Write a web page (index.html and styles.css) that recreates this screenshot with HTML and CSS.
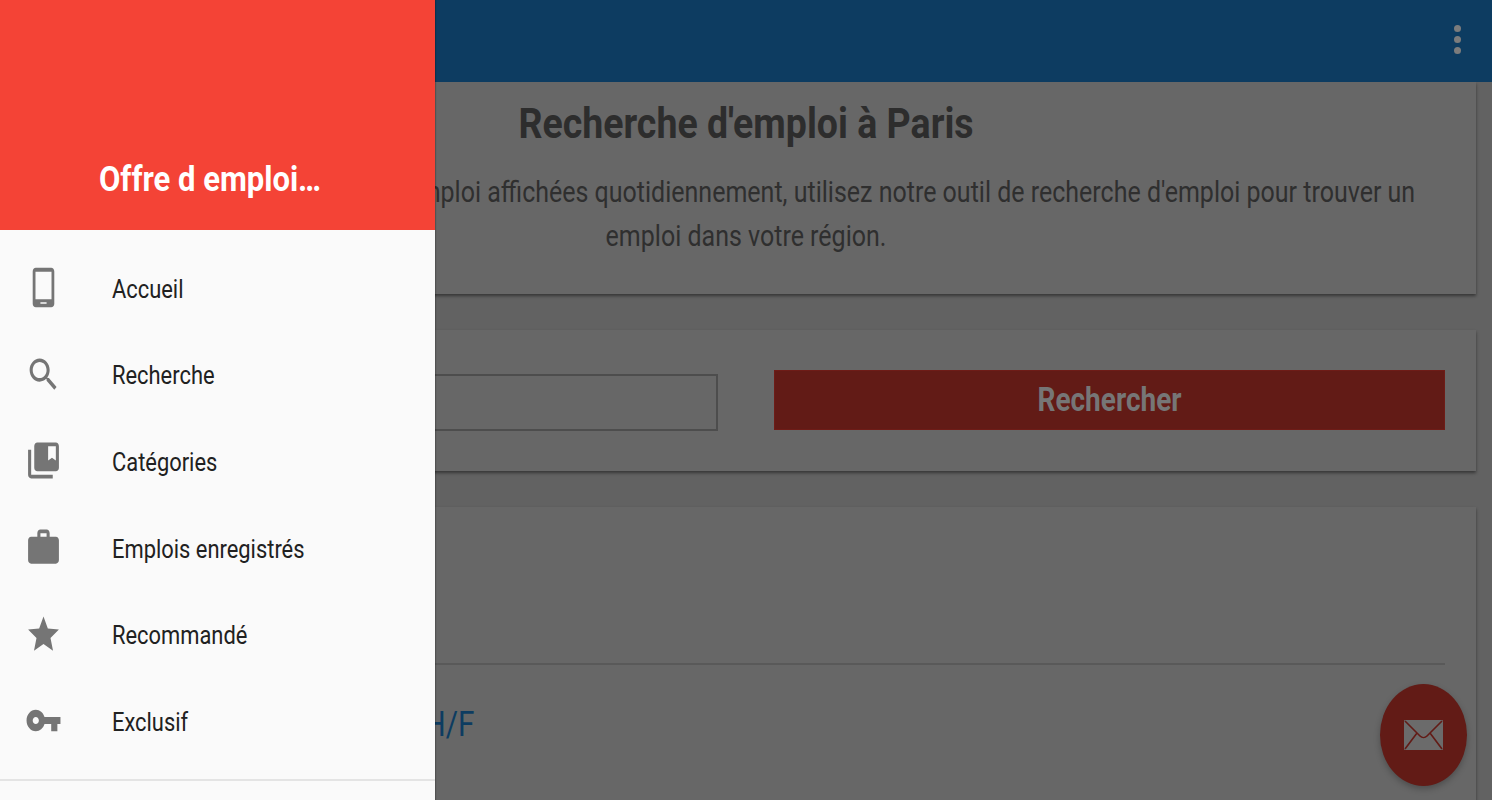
FILE: index.html
```html
<!DOCTYPE html>
<html lang="fr">
<head>
  <meta charset="UTF-8" />
  <title>Offre d emploi</title>
  <link rel="stylesheet" href="styles.css">
</head>
<body>

  <div class="app">
    <header class="toolbar">
      <div class="menu-dots"><span></span><span></span><span></span></div>
    </header>

    <main class="content">
      <section class="card intro">
        <h1><span class="tall">Recherche d'emploi à Paris</span></h1>
        <p><span class="tall">Avec des centaines d'offres d'emploi affichées quotidiennement, utilisez notre outil de recherche d'emploi pour trouver un</span></p>
        <p><span class="tall">emploi dans votre région.</span></p>
      </section>

      <section class="card search">
        <input class="search-input" type="text" />
        <button class="search-button" type="button"><span class="tall">Rechercher</span></button>
      </section>

      <section class="card results">
        <div class="job">
          <a class="job-title" href="#"><span class="tall">Responsable commercial(e) H/F</span></a>
        </div>
      </section>
    </main>

    <button class="fab" type="button" aria-label="Contact">
      <svg class="fab-icon" viewBox="0 0 39 30" preserveAspectRatio="none">
        <rect width="39" height="30" rx="1" fill="#6b6b6b" />
        <path d="M1 1l15 15c2 2 5 2 7 0L38 1M1 29l12-16M38 29L26 13" fill="none" stroke="#621b16" stroke-width="1.6" />
      </svg>
    </button>

    <nav class="drawer">
      <div class="drawer-header"><span class="tall">Offre d emploi…</span></div>
      <ul class="drawer-list">
        <li>
          <svg class="icon" viewBox="0 0 24 24" preserveAspectRatio="none"><path fill-rule="evenodd" d="M7 1h10c1.100 0 2 .9 2 2v18c0 1.100-.9 2-2 2H7c-1.100 0-2-.9-2-2V3c0-1.100.9-2 2-2zM6.800 3.200v15.300h10.400V3.200zM10 20.200V21h4v-.8z" /></svg>
          <span class="tall">Accueil</span>
        </li>
        <li>
          <svg class="icon" viewBox="0 0 24 24" preserveAspectRatio="none"><path d="M15.500 14h-.79l-.28-.27C15.410 12.590 16 11.110 16 9.500 16 5.910 13.090 3 9.500 3S3 5.910 3 9.500 5.910 16 9.500 16c1.610 0 3.090-.59 4.230-1.570l.27.28v.79l5 4.990L20.490 19l-4.990-5zm-6 0C7.010 14 5 11.990 5 9.500S7.010 5 9.500 5 14 7.010 14 9.500 11.990 14 9.500 14z" /></svg>
          <span class="tall">Recherche</span>
        </li>
        <li>
          <svg class="icon" viewBox="0 0 24 24" preserveAspectRatio="none"><path d="M4 6H2v14c0 1.100.9 2 2 2h14v-2H4V6zm16-4H8c-1.100 0-2 .9-2 2v12c0 1.100.9 2 2 2h12c1.100 0 2-.9 2-2V4c0-1.100-.9-2-2-2zm0 10l-2.500-1.500L15 12V4h5v8z" /></svg>
          <span class="tall">Catégories</span>
        </li>
        <li>
          <svg class="icon" viewBox="0 0 24 24" preserveAspectRatio="none"><path d="M20 6h-4V4c0-1.110-.89-2-2-2h-4c-1.110 0-2 .89-2 2v2H4c-1.110 0-1.990.89-1.990 2L2 19c0 1.110.89 2 2 2h16c1.110 0 2-.89 2-2V8c0-1.110-.89-2-2-2zm-6 0h-4V4h4v2z" /></svg>
          <span class="tall">Emplois enregistrés</span>
        </li>
        <li>
          <svg class="icon" viewBox="0 0 24 24" preserveAspectRatio="none"><path d="M12 17.270L18.180 21l-1.640-7.030L22 9.240l-7.190-.61L12 2 9.190 8.630 2 9.240l5.460 4.730L5.820 21z" /></svg>
          <span class="tall">Recommandé</span>
        </li>
        <li>
          <svg class="icon" viewBox="0 0 24 24" preserveAspectRatio="none"><path d="M12.650 10C11.830 7.670 9.610 6 7 6c-3.310 0-6 2.690-6 6s2.690 6 6 6c2.610 0 4.830-1.670 5.650-4H17v4h4v-4h2v-4H12.650zM7 14c-1.100 0-2-.9-2-2s.9-2 2-2 2 .9 2 2-.9 2-2 2z" /></svg>
          <span class="tall">Exclusif</span>
        </li>
      </ul>
      <div class="drawer-divider"></div>
    </nav>
  </div>

</body>
</html>
```

FILE: styles.css
```css
* {
  box-sizing: border-box;
}

body {
  margin: 0;
  font-family: Roboto, "Liberation Sans", sans-serif;
  background-color: #626262;
}

/* the whole capture is stretched vertically */
.tall {
  display: inline-block;
  transform: scaleY(1.155);
}

.app {
  position: relative;
  height: 100vh;
  overflow: hidden;
  display: flex;
  flex-direction: column;
}

.toolbar {
  flex: none;
  height: 82px;
  padding-right: 31px;
  background-color: #0d3c61;
  display: flex;
  justify-content: flex-end;
  align-items: flex-start;
  position: relative;
  z-index: 1;
}

.menu-dots {
  margin-top: 25px;
  display: flex;
  flex-direction: column;
  gap: 4px;
}

.menu-dots span {
  width: 7px;
  height: 7px;
  border-radius: 50%;
  background-color: #7c7c7c;
}

.content {
  flex: 1;
  padding: 0 16px;
  display: flex;
  flex-direction: column;
  gap: 36px;
}

.card {
  flex: none;
  background-color: #676767;
  box-shadow: 0 2px 3px rgba(0,0,0,0.45);
}

.intro {
  height: 212px;
  padding-top: 16px;
  text-align: center;
  color: #2f2f2f;
}

.intro h1 {
  margin: 0 0 23px;
  font-size: 37.500px;
  line-height: 50px;
  font-weight: 700;
  color: #2d2d2d;
}

.intro p {
  margin: 0;
  font-size: 25px;
  line-height: 44px;
}

.search {
  height: 141px;
  padding: 40px 31px 0;
  display: grid;
  grid-template-columns: 1fr 1fr;
  column-gap: 56px;
  align-items: start;
}

.search-input {
  display: block;
  width: 100%;
  height: 57px;
  margin-top: 4px;
  background: transparent;
  border: 2px solid #4d4d4d;
}

.search-button {
  height: 60px;
  padding: 0;
  background-color: #621b16;
  border: 1px solid #6e1c17;
  color: #767676;
  font-family: inherit;
  font-size: 28px;
  font-weight: 700;
}

.results {
  height: 400px;
  padding: 156px 31px 0;
}

.job {
  border-top: 2px solid #595959;
  padding-top: 37px;
}

.job-title {
  font-size: 29.700px;
  line-height: 44px;
  color: #0d3c61;
  text-decoration: none;
}

.fab {
  position: absolute;
  left: 1380px;
  top: 684px;
  width: 87px;
  height: 102px;
  padding: 0;
  border: none;
  border-radius: 50%;
  background-color: #621b16;
  box-shadow: 0 3px 6px rgba(0,0,0,0.25);
  display: flex;
  align-items: center;
  justify-content: center;
}

.fab-icon {
  width: 39px;
  height: 30px;
}

.drawer {
  position: absolute;
  left: 0;
  top: 0;
  bottom: 0;
  z-index: 2;
  width: 435px;
  background-color: #fafafa;
  box-shadow: 1px 0 1px rgba(0,0,0,0.2);
}

.drawer-header {
  height: 230px;
  padding-top: 152px;
  padding-right: 15px;
  background-color: #f44336;
  color: white;
  text-align: center;
  font-size: 31px;
  line-height: 54px;
  font-weight: 700;
}

.drawer-list {
  margin: 0;
  padding: 16px 0 0;
  list-style: none;
}

.drawer-list li {
  height: 86.600px;
  padding-left: 25px;
  display: flex;
  align-items: center;
  font-size: 21.900px;
  color: #212121;
}

.icon {
  flex: none;
  width: 37px;
  height: 43px;
  margin-right: 50px;
  margin-bottom: 3px;
  fill: #757575;
}

.drawer-divider {
  margin-top: 13px;
  border-top: 2px solid #e4e4e4;
}
```
